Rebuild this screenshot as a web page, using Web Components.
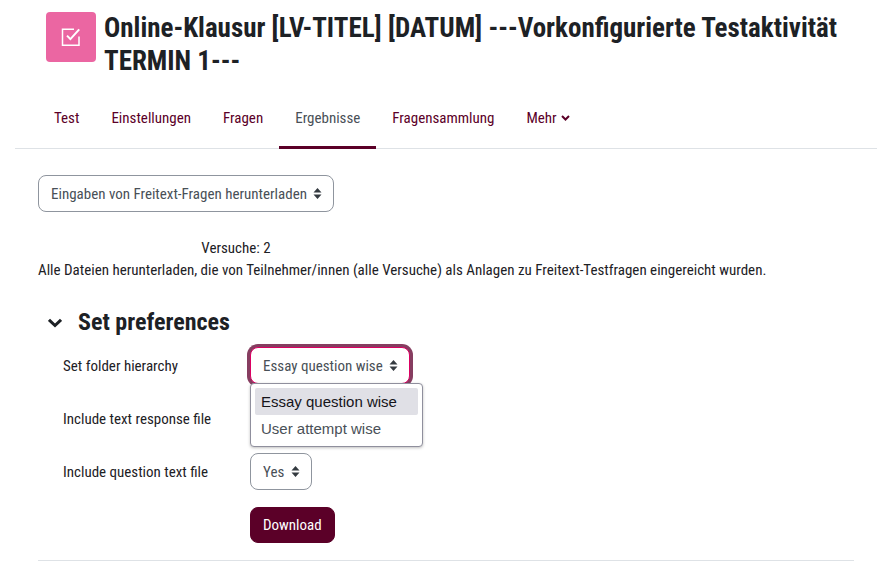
<!DOCTYPE html>
<html lang="de">
<head>
<meta charset="utf-8">
<meta name="viewport" content="width=device-width, initial-scale=1">
<title>Online-Klausur</title>
<style>
  body {
    margin: 0;
    background: #fff;
    color: #1d2125;
    font: 15px/22px "Roboto Condensed", "Liberation Sans Narrow", Roboto, sans-serif;
  }
</style>
</head>
<body>
<quiz-page></quiz-page>

<script>
const define = (name, html, setup) => {
  const template = document.createElement('template');
  template.innerHTML = html;
  customElements.define(name, class extends HTMLElement {
    constructor() {
      super();
      this.attachShadow({ mode: 'open' }).append(template.content.cloneNode(true));
    }
    connectedCallback() {
      if (setup) setup(this, this.shadowRoot);
    }
  });
};

define('activity-header', `
  <style>
    :host { display: flex; align-items: flex-start; gap: 8px; padding: 12px 24px 0 46px; }
    .icon { flex: none; display: grid; place-items: center; width: 50px; height: 50px; border-radius: 4px; background: #eb66a2; }
    h1 { margin: 0; font-size: 27px; line-height: 33px; font-weight: 700; color: #1d2125; }
  </style>
  <span class="icon">
    <svg width="20" height="20" viewBox="0 0 20 20" fill="none" stroke="#fff" stroke-width="1.5">
      <path d="M13 2.2H1.5V18.3H18V9.5"/>
      <path d="M6 8.6L9.4 12.1L18.2 2.4" stroke-width="2"/>
    </svg>
  </span>
  <h1><slot></slot></h1>
`);

define('nav-tab', `
  <style>
    :host { display: block; }
    a { display: flex; align-items: center; gap: 4px; padding: 17px 16px; border-bottom: 3px solid transparent; color: #5b0028; text-decoration: none; white-space: nowrap; }
    :host([active]) a { color: #495057; border-bottom-color: #5b0028; }
    svg { display: none; }
    :host([menu]) svg { display: block; }
  </style>
  <a href="#"><slot></slot>
    <svg width="9" height="6" viewBox="0 0 9 6" fill="none" stroke="currentColor" stroke-width="2"><path d="M1 1L4.5 4.5L8 1"/></svg>
  </a>
`);

define('nav-tabs', `
  <style>
    :host { display: block; margin: 12px 10px 0 15px; padding: 0 23px; border-bottom: 1px solid #dee2e6; }
    nav { display: flex; margin-bottom: -1px; }
  </style>
  <nav><slot></slot></nav>
`);

define('option-select', `
  <style>
    :host { display: inline-flex; position: relative; vertical-align: top; }
    select {
      appearance: none; margin: 0; padding: 0 26px 0 12px; height: 37px;
      border: 1px solid #8f959e; border-radius: 8px; background: #fff;
      color: #495057; font: inherit; outline: none;
    }
    .arrows { position: absolute; right: 12px; top: 13px; pointer-events: none; }
    :host([open]) select { border-color: #db0062; box-shadow: 0 0 0 3px #863d60; }
  </style>
  <select></select>
  <svg class="arrows" width="9" height="11" viewBox="0 0 9 11" fill="#343a40"><path d="M.5 4.5L4.5 0L8.5 4.5ZM.5 6.5L4.5 11L8.5 6.5Z"/></svg>
  <slot></slot>
`, (host, root) => {
  const select = root.querySelector('select');
  select.setAttribute('aria-label', host.getAttribute('label'));
  select.replaceChildren(...host.getAttribute('options').split('|').map(text => new Option(text)));
});

define('option-list', `
  <style>
    :host {
      position: absolute; z-index: 1; top: 36px; left: 0; box-sizing: border-box; min-width: 173px;
      padding: 4px; border: 1px solid #8f8f9d; border-radius: 4px; background: #fff;
      box-shadow: 0 1px 3px rgba(0, 0, 0, .25);
      font: 15px/27px "Liberation Sans", Arial, sans-serif; color: #495057; white-space: nowrap;
    }
    ul { margin: 0; padding: 0; list-style: none; }
    li { padding: 0 6px; border-radius: 2px; }
    li[aria-selected="true"] { background: #e0e0e6; color: #15141a; }
  </style>
  <ul role="listbox" aria-label="Set folder hierarchy">
    <li role="option" aria-selected="true">Essay question wise</li>
    <li role="option" aria-selected="false">User attempt wise</li>
  </ul>
`);

define('form-row', `
  <style>
    :host { display: grid; grid-template-columns: 187px 1fr; align-items: center; min-height: 37px; }
    .field { justify-self: start; display: flex; }
  </style>
  <span class="label"></span>
  <div class="field"><slot></slot></div>
`, (host, root) => { root.querySelector('.label').textContent = host.getAttribute('label') || ''; });

define('action-button', `
  <style>
    :host { display: inline-flex; }
    button { height: 36px; padding: 0 12px; border: 1px solid #5b0028; border-radius: 8px; background: #5b0028; color: #fff; font: inherit; }
  </style>
  <button type="submit"><slot></slot></button>
`);

define('preference-section', `
  <style>
    :host { display: block; margin-top: 27px; padding-bottom: 17px; border-bottom: 1px solid #dee2e6; }
    h3 { display: flex; margin: 0; font-size: 24px; line-height: 29px; font-weight: 700; }
    button { display: flex; align-items: center; gap: 16px; padding: 0 0 0 10px; border: 0; background: none; color: inherit; font: inherit; }
    .rows { display: grid; gap: 16px; padding: 10px 0 0 25px; }
    svg { display: block; }
  </style>
  <h3><button type="button" aria-expanded="true">
    <svg width="14" height="10" viewBox="0 0 14 10" fill="none" stroke="currentColor" stroke-width="3"><path d="M1 1.8L7 7.5L13 1.8"/></svg>
    Set preferences
  </button></h3>
  <div class="rows"><slot></slot></div>
`);

define('quiz-page', `
  <style>
    :host { display: block; }
    main { padding: 26px 33px 11px 38px; }
    .attempts { margin: 25px 0 0; padding-right: 420px; text-align: center; }
    p { margin: 0; }
  </style>
  <activity-header>Online-Klausur [LV-TITEL] [DATUM] ---Vorkonfigurierte Testaktivität TERMIN 1---</activity-header>
  <nav-tabs>
    <nav-tab>Test</nav-tab>
    <nav-tab>Einstellungen</nav-tab>
    <nav-tab>Fragen</nav-tab>
    <nav-tab active>Ergebnisse</nav-tab>
    <nav-tab>Fragensammlung</nav-tab>
    <nav-tab menu>Mehr</nav-tab>
  </nav-tabs>
  <main>
    <option-select label="Bericht" options="Eingaben von Freitext-Fragen herunterladen"></option-select>
    <p class="attempts">Versuche: 2</p>
    <p>Alle Dateien herunterladen, die von Teilnehmer/innen (alle Versuche) als Anlagen zu Freitext-Testfragen eingereicht wurden.</p>
    <preference-section>
      <form-row label="Set folder hierarchy">
        <option-select open label="Set folder hierarchy" options="Essay question wise|User attempt wise"><option-list></option-list></option-select>
      </form-row>
      <form-row label="Include text response file">
        <option-select label="Include text response file" options="Yes|No"></option-select>
      </form-row>
      <form-row label="Include question text file">
        <option-select label="Include question text file" options="Yes|No"></option-select>
      </form-row>
      <form-row><action-button>Download</action-button></form-row>
    </preference-section>
  </main>
`);
</script>
</body>
</html>
